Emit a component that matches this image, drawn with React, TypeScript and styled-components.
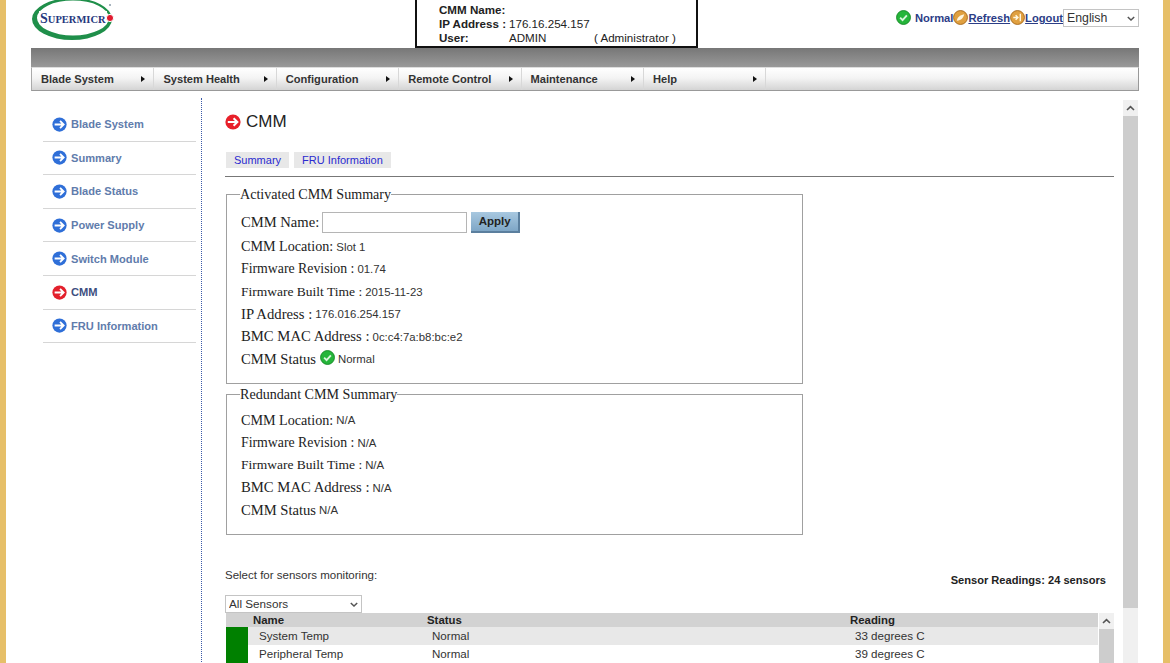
import React from 'react';
import styled, { createGlobalStyle } from 'styled-components';

const GlobalStyle = createGlobalStyle`
  html, body {
    margin: 0;
    padding: 0;
    background: #fff;
    overflow: hidden;
  }
  body {
    font-family: "Liberation Sans", Arial, sans-serif;
  }
`;

const Frame = styled.div`
  box-sizing: border-box;
  width: 1170px;
  height: 663px;
  overflow: hidden;
  background: #fff;
  border-left: 6px solid #e6bf68;
  border-right: 7px solid #e6bf68;
  padding: 0 24px 0 25px;
`;

const Header = styled.header`
  display: grid;
  grid-template-columns: 384px 283px 1fr;
  height: 48px;
`;

const Logo = styled.svg`
  display: block;
  width: 90px;
  height: 42px;
`;

const InfoBox = styled.div`
  box-sizing: border-box;
  height: 48px;
  border: 2px solid #111;
  border-top: none;
  padding: 3px 0 0 22px;
  display: grid;
  grid-template-columns: 70px 85px 1fr;
  grid-auto-rows: 14px;
  font-size: 11.6px;
  line-height: 14px;
  color: #222;
`;

const InfoLabel = styled.span`
  font-weight: bold;
`;

const StatusBar = styled.div`
  display: flex;
  justify-content: flex-end;
  align-items: flex-start;
  padding-top: 9px;
`;

const StatusIcon = styled.svg`
  display: block;
  width: 15px;
  height: 15px;
  margin-top: 1px;
  flex: none;
`;

const StatusText = styled.span<{ $link?: boolean }>`
  font-size: 11.2px;
  line-height: 18px;
  font-weight: bold;
  color: #2b3d86;
  text-decoration: ${({ $link }) => ($link ? 'underline' : 'none')};
`;

const NormalText = styled(StatusText)`
  margin-left: 4px;
`;

const SelectWrap = styled.div<{ $width: number }>`
  position: relative;
  flex: none;
  width: ${({ $width }) => $width}px;
  height: 18px;
`;

const PlainSelect = styled.select<{ $size: number }>`
  display: block;
  box-sizing: border-box;
  width: 100%;
  height: 18px;
  appearance: none;
  border: 1px solid #c4c4c4;
  border-radius: 0;
  background: #fff;
  color: #333;
  font-family: "Liberation Sans", Arial, sans-serif;
  font-size: ${({ $size }) => $size}px;
  padding: 0 0 1px 3px;
`;

const SelectChevron = styled.svg`
  position: absolute;
  top: 7px;
  right: 4px;
  width: 8px;
  height: 5px;
  pointer-events: none;
`;

const GreyBar = styled.div`
  height: 19px;
  background: linear-gradient(#777, #999);
`;

const Menu = styled.nav`
  box-sizing: border-box;
  display: flex;
  height: 24px;
  background: linear-gradient(#fff, #f4f4f4 45%, #d4d4d4);
  border: 1px solid #999;
  border-top: 1px solid #ddd;
  border-left: 1px solid #aaa;
`;

const MenuItem = styled.div`
  box-sizing: border-box;
  width: 122.4px;
  padding: 0 8px 0 9px;
  display: flex;
  justify-content: space-between;
  align-items: center;
  border-right: 1px solid #d8d8d8;
  font-size: 11.1px;
  font-weight: bold;
  color: #333;
`;

const MenuArrow = styled.span`
  width: 0;
  height: 0;
  border-left: 4px solid #111;
  border-top: 3px solid transparent;
  border-bottom: 3px solid transparent;
`;

const Body = styled.div`
  display: flex;
  margin-top: 7px;
  height: 580px;
`;

const Sidebar = styled.aside`
  box-sizing: border-box;
  flex: none;
  width: 171px;
  padding: 10px 5px 0 12px;
  border-right: 1px dotted #3a5aa8;
`;

const SideItem = styled.div<{ $active?: boolean }>`
  box-sizing: border-box;
  height: 33.6px;
  padding-left: 9px;
  display: flex;
  align-items: center;
  gap: 4px;
  border-bottom: 1px solid #d6d6d6;
  font-size: 11.1px;
  font-weight: bold;
  color: ${({ $active }) => ($active ? '#3d4f80' : '#5f7cac')};
`;

const ArrowIcon = styled.svg<{ $size: number }>`
  display: block;
  flex: none;
  width: ${({ $size }) => $size}px;
  height: ${({ $size }) => $size}px;
`;

const Content = styled.main`
  flex: none;
  width: 889px;
  margin-left: 23px;
`;

const Title = styled.h1`
  margin: 15px 0 0;
  height: 18px;
  display: flex;
  align-items: center;
  gap: 5px;
  font-size: 17px;
  font-weight: normal;
  color: #222;
`;

const Tabs = styled.div`
  display: flex;
  gap: 5px;
  margin: 21px 0 0 1px;
`;

const Tab = styled.a`
  height: 16px;
  padding: 0 8px;
  background: #e8e8e8;
  font-size: 11px;
  line-height: 16px;
  color: #2a2ad0;
`;

const Rule = styled.hr`
  margin: 8px 0 0;
  border: none;
  border-top: 1px solid #777;
`;

const Group = styled.fieldset<{ $height: number }>`
  box-sizing: border-box;
  width: 577px;
  height: ${({ $height }) => $height}px;
  margin: 0 0 0 1px;
  padding: 0 0 0 14px;
  border: 1px solid #a0a0a0;
`;

const FirstGroup = styled(Group)`
  margin-top: 9px;
`;

const SecondGroup = styled(Group)`
  margin-top: 2px;
`;

const GroupTitle = styled.legend`
  margin-left: -1px;
  padding: 0;
  font-family: "Liberation Serif", "Times New Roman", serif;
  font-size: 14.1px;
  line-height: 17px;
  color: #222;
`;

const Field = styled.div<{ $first?: boolean; $size: number }>`
  height: 22.5px;
  margin-top: ${({ $first }) => ($first ? '6px' : '0')};
  display: flex;
  align-items: center;
  font-family: "Liberation Serif", "Times New Roman", serif;
  font-size: ${({ $size }) => $size}px;
  white-space: nowrap;
  color: #222;
`;

const NameField = styled(Field)`
  height: 27px;
  margin-top: 5.5px;
`;

const FieldValue = styled.span`
  margin-left: 3px;
  font-family: "Liberation Sans", Arial, sans-serif;
  font-size: 11.4px;
  color: #333;
`;

const StatusValue = styled(FieldValue)`
  margin-left: 3px;
`;

const StatusGlyph = styled(StatusIcon)`
  margin: 0 0 0 4px;
  position: relative;
  top: -2px;
`;

const NameInput = styled.input`
  box-sizing: border-box;
  width: 145px;
  height: 21px;
  margin-left: 3px;
  border: 1px solid #b5b5b5;
  background: #fff;
`;

const ApplyButton = styled.button`
  box-sizing: border-box;
  width: 49px;
  height: 21px;
  margin-left: 4px;
  padding: 0;
  background: linear-gradient(#a8c8e0, #7ea6c6);
  border: none;
  border-right: 2px solid #5b7f9e;
  border-bottom: 2px solid #5b7f9e;
  font-family: "Liberation Sans", Arial, sans-serif;
  font-size: 11.5px;
  font-weight: bold;
  color: #222;
`;

const SensorHead = styled.div`
  display: flex;
  justify-content: space-between;
  align-items: flex-start;
  margin-top: 33px;
  height: 27px;
  padding-right: 8px;
`;

const SelectLabel = styled.span`
  font-size: 11.5px;
  line-height: 14px;
  color: #333;
`;

const ReadingsLabel = styled.span`
  margin-top: 5px;
  font-size: 11.1px;
  line-height: 14px;
  font-weight: bold;
  color: #222;
`;

const TableWrap = styled.div`
  display: flex;
  margin-left: 1px;
`;

const SensorTable = styled.div`
  width: 872px;
`;

const HeadRow = styled.div`
  display: grid;
  grid-template-columns: 27px 174px 423px 1fr;
  height: 14px;
  background: #d2d2d2;
  font-size: 11.4px;
  line-height: 14px;
  font-weight: bold;
  color: #222;
`;

const DataRow = styled.div<{ $shaded?: boolean }>`
  display: grid;
  grid-template-columns: 22px 5px 173px 423px 1fr;
  height: 18px;
  background: ${({ $shaded }) => ($shaded ? '#e8e8e8' : '#fff')};
  font-size: 11.6px;
  line-height: 18px;
  color: #333;
`;

const HealthCell = styled.span`
  background: #008000;
`;

const DataCell = styled.span`
  padding-left: 6px;
`;

const Track = styled.div`
  flex: none;
  width: 15px;
  background: #f0f0f0;
`;

const PageTrack = styled(Track)`
  margin: 2px 0 0 9px;
  height: 563px;
`;

const TableTrack = styled(Track)`
  margin-left: 1px;
  height: 50px;
`;

const TrackButton = styled.div`
  height: 16px;
  display: flex;
  align-items: center;
  justify-content: center;
`;

const Chevron = styled.svg`
  display: block;
  width: 9px;
  height: 6px;
`;

const Thumb = styled.div<{ $height: number }>`
  height: ${({ $height }) => $height}px;
  background: #cdcdcd;
`;

function GoArrow({ color, size }: { color: string; size: number }) {
  return (
    <ArrowIcon $size={size} viewBox="0 0 16 16">
      <circle cx="8" cy="8" r="7.6" fill={color} />
      <path d="M2.8 8h9M8.6 4.2 12.4 8l-3.8 3.8" fill="none" stroke="#fff" strokeWidth="2" />
    </ArrowIcon>
  );
}

function CheckDot() {
  return (
    <>
      <circle cx="8" cy="8" r="7.4" fill="#25b53a" stroke="#178a28" strokeWidth="1" />
      <path d="M4.4 8.2 7 10.8l4.6-5" fill="none" stroke="#d9f5dc" strokeWidth="2" />
    </>
  );
}

function UpChevron() {
  return (
    <Chevron viewBox="0 0 9 6">
      <path d="M1 5 4.5 1.6 8 5" fill="none" stroke="#555" strokeWidth="1.6" />
    </Chevron>
  );
}

function Dropdown({ width, size, label }: { width: number; size: number; label: string }) {
  return (
    <SelectWrap $width={width}>
      <PlainSelect $size={size} defaultValue={label}>
        <option>{label}</option>
      </PlainSelect>
      <SelectChevron viewBox="0 0 8 5">
        <path d="M.8 1 4 4 7.2 1" fill="none" stroke="#555" strokeWidth="1.5" />
      </SelectChevron>
    </SelectWrap>
  );
}

const menuItems = ['Blade System', 'System Health', 'Configuration', 'Remote Control', 'Maintenance', 'Help'];

const sideItems = ['Blade System', 'Summary', 'Blade Status', 'Power Supply', 'Switch Module', 'CMM', 'FRU Information'];

// the original's hinted serif runs wider on capitals, so each label gets its own size
const labelSizes: Record<string, number> = {
  'CMM Name:': 14.6,
  'CMM Location:': 14.15,
  'Firmware Revision :': 13.8,
  'Firmware Built Time :': 13.5,
  'IP Address :': 14.7,
  'BMC MAC Address :': 14.7,
  'CMM Status': 14.6,
};

const activatedRows = [
  { label: 'CMM Location:', value: 'Slot 1' },
  { label: 'Firmware Revision :', value: '01.74' },
  { label: 'Firmware Built Time :', value: '2015-11-23' },
  { label: 'IP Address :', value: '176.016.254.157' },
  { label: 'BMC MAC Address :', value: '0c:c4:7a:b8:bc:e2' },
];

const redundantRows = [
  { label: 'CMM Location:', value: 'N/A' },
  { label: 'Firmware Revision :', value: 'N/A' },
  { label: 'Firmware Built Time :', value: 'N/A' },
  { label: 'BMC MAC Address :', value: 'N/A' },
  { label: 'CMM Status', value: 'N/A' },
];

const sensors = [
  { name: 'System Temp', status: 'Normal', reading: '33 degrees C' },
  { name: 'Peripheral Temp', status: 'Normal', reading: '39 degrees C' },
];

export default function App() {
  return (
    <Frame>
      <GlobalStyle />
      <Header>
        <Logo viewBox="0 0 90 42">
          <path
            fillRule="evenodd"
            d="M1 19a40 21 0 1 0 80 0a40 21 0 1 0 -80 0ZM6 18a36 17.5 0 1 0 72 0a36 17.5 0 1 0 -72 0Z"
            fill="#1f8f4a"
          />
          <rect x="8" y="11" width="68" height="13" fill="#fff" />
          <text x="9" y="22.5" fontFamily="Liberation Serif" fontWeight="bold" fontSize="14" fill="#26387e">
            S<tspan fontSize="10.5">UPERMICR</tspan>
          </text>
          <circle cx="79" cy="18" r="3.6" fill="#e01b2f" stroke="#fff" strokeWidth="1" />
          <circle cx="79" cy="5" r="1" fill="#8a9aa8" />
        </Logo>
        <InfoBox>
          <InfoLabel>CMM Name:</InfoLabel>
          <span />
          <span />
          <InfoLabel>IP Address :</InfoLabel>
          <span>176.16.254.157</span>
          <span />
          <InfoLabel>User:</InfoLabel>
          <span>ADMIN</span>
          <span>( Administrator )</span>
        </InfoBox>
        <StatusBar>
          <StatusIcon viewBox="0 0 16 16">
            <CheckDot />
          </StatusIcon>
          <NormalText>Normal</NormalText>
          <StatusIcon viewBox="0 0 16 16">
            <circle cx="8" cy="8" r="7.4" fill="#e0a040" stroke="#a86a1c" strokeWidth="1" />
            <path d="M4 11.5c.5-3.5 3-6 8-7-1 4-3 6.5-8 7Z" fill="#fff6df" />
          </StatusIcon>
          <StatusText $link>Refresh</StatusText>
          <StatusIcon viewBox="0 0 16 16">
            <circle cx="8" cy="8" r="7.4" fill="#e0a040" stroke="#a86a1c" strokeWidth="1" />
            <path d="M3.5 8h4M6 5.5 8.5 8 6 10.5M11 4v8" fill="none" stroke="#fff6df" strokeWidth="1.5" />
          </StatusIcon>
          <StatusText $link>Logout</StatusText>
          <Dropdown width={76} size={12.3} label="English" />
        </StatusBar>
      </Header>
      <GreyBar />
      <Menu>
        {menuItems.map(item => (
          <MenuItem key={item}>
            {item}
            <MenuArrow />
          </MenuItem>
        ))}
      </Menu>
      <Body>
        <Sidebar>
          {sideItems.map(item => (
            <SideItem key={item} $active={item === 'CMM'}>
              <GoArrow color={item === 'CMM' ? '#e3202c' : '#2f6fd8'} size={15} />
              {item}
            </SideItem>
          ))}
        </Sidebar>
        <Content>
          <Title>
            <GoArrow color="#e8202a" size={16} />
            CMM
          </Title>
          <Tabs>
            <Tab>Summary</Tab>
            <Tab>FRU Information</Tab>
          </Tabs>
          <Rule />
          <FirstGroup $height={198}>
            <GroupTitle>Activated CMM Summary</GroupTitle>
            <NameField $size={labelSizes['CMM Name:']}>
              CMM Name:
              <NameInput />
              <ApplyButton>Apply</ApplyButton>
            </NameField>
            {activatedRows.map(row => (
              <Field key={row.label} $size={labelSizes[row.label]}>
                {row.label}
                <FieldValue>{row.value}</FieldValue>
              </Field>
            ))}
            <Field $size={labelSizes['CMM Status']}>
              CMM Status
              <StatusGlyph viewBox="0 0 16 16">
                <CheckDot />
              </StatusGlyph>
              <StatusValue>Normal</StatusValue>
            </Field>
          </FirstGroup>
          <SecondGroup $height={149}>
            <GroupTitle>Redundant CMM Summary</GroupTitle>
            {redundantRows.map((row, i) => (
              <Field key={row.label} $first={i === 0} $size={labelSizes[row.label]}>
                {row.label}
                <FieldValue>{row.value}</FieldValue>
              </Field>
            ))}
          </SecondGroup>
          <SensorHead>
            <SelectLabel>Select for sensors monitoring:</SelectLabel>
            <ReadingsLabel>Sensor Readings: 24 sensors</ReadingsLabel>
          </SensorHead>
          <Dropdown width={137} size={11.7} label="All Sensors" />
          <TableWrap>
            <SensorTable>
              <HeadRow>
                <span />
                <span>Name</span>
                <span>Status</span>
                <span>Reading</span>
              </HeadRow>
              {sensors.map((sensor, i) => (
                <DataRow key={sensor.name} $shaded={i === 0}>
                  <HealthCell />
                  <span />
                  <DataCell>{sensor.name}</DataCell>
                  <DataCell>{sensor.status}</DataCell>
                  <DataCell>{sensor.reading}</DataCell>
                </DataRow>
              ))}
            </SensorTable>
            <TableTrack>
              <TrackButton>
                <UpChevron />
              </TrackButton>
              <Thumb $height={34} />
            </TableTrack>
          </TableWrap>
        </Content>
        <PageTrack>
          <TrackButton>
            <UpChevron />
          </TrackButton>
          <Thumb $height={492} />
        </PageTrack>
      </Body>
    </Frame>
  );
}
